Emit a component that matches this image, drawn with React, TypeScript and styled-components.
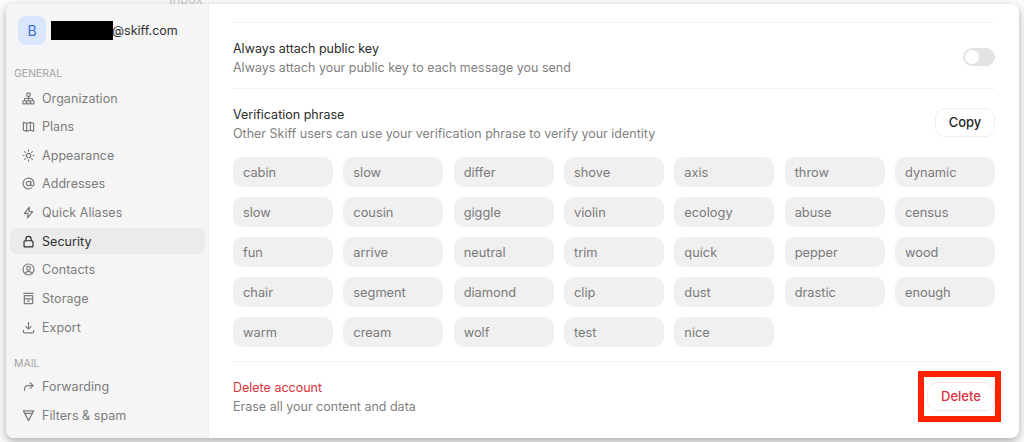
import React from 'react';
import styled, { createGlobalStyle } from 'styled-components';

const GlobalStyle = createGlobalStyle`
  html, body {
    margin: 0;
    padding: 0;
    background: #fdfdfd;
    font-family: Inter, "Liberation Sans", sans-serif;
  }
`;

const Page = styled.div`
  position: relative;
  box-sizing: border-box;
  width: 1024px;
  height: 442px;
  overflow: hidden;
  padding: 4px 5px 4px 6px;
  background: #fbfbfb;
`;

const BehindText = styled.span`
  position: absolute;
  top: -9px;
  left: 169px;
  font-size: 13px;
  color: #c9c9c9;
`;

const Modal = styled.div`
  position: relative;
  display: flex;
  height: 434px;
  border-radius: 8px;
  overflow: hidden;
  background: #ffffff;
  box-shadow: 0 3px 8px rgba(0, 0, 0, 0.32);
`;

const Sidebar = styled.aside`
  box-sizing: border-box;
  width: 203px;
  flex-shrink: 0;
  padding: 11px 3px 0 4px;
  background: #f5f5f5;
  border-right: 1px solid #efefef;
`;

const Profile = styled.div`
  display: flex;
  align-items: center;
  gap: 5px;
  padding-left: 8px;
  height: 30px;
`;

const Avatar = styled.div`
  display: flex;
  align-items: center;
  justify-content: center;
  width: 28px;
  height: 29px;
  border-radius: 8px;
  background: #d9e6fd;
  color: #3f6fd0;
  font-size: 14px;
`;

const Redaction = styled.div`
  width: 62px;
  height: 19px;
  background: #000;
`;

const Email = styled.span`
  margin-left: -6px;
  font-size: 12.5px;
  color: #333;
`;

const SectionLabel = styled.div<{ $top: number }>`
  margin-top: ${(p) => p.$top}px;
  padding-left: 4px;
  font-size: 10.5px;
  line-height: 13px;
  color: #a3a3a3;
`;

const NavList = styled.div<{ $top: number }>`
  margin-top: ${(p) => p.$top}px;
`;

const NavItem = styled.div<{ $active?: boolean }>`
  display: flex;
  align-items: center;
  gap: 7px;
  height: 26px;
  margin-bottom: 2.67px;
  padding-left: 12px;
  border-radius: 7px;
  font-size: 12.5px;
  letter-spacing: 0.05px;
  color: ${(p) => (p.$active ? '#303030' : '#7c7c7c')};
  background: ${(p) => (p.$active ? '#ebebeb' : 'transparent')};
`;

const NavIcon = styled.svg`
  width: 13px;
  height: 13px;
  flex-shrink: 0;
  fill: none;
  stroke: currentColor;
  stroke-width: 1.3;
  stroke-linecap: round;
  stroke-linejoin: round;
`;

const Main = styled.main`
  flex: 1;
  box-sizing: border-box;
  padding: 0 24px;
`;

const Section = styled.section<{ $height: number; $last?: boolean }>`
  box-sizing: border-box;
  height: ${(p) => p.$height}px;
  border-bottom: ${(p) => (p.$last ? 'none' : '1px solid #f2f2f2')};
`;

const SettingRow = styled.div<{ $top: number }>`
  display: flex;
  align-items: center;
  justify-content: space-between;
  padding-top: ${(p) => p.$top}px;
`;

const Title = styled.div<{ $danger?: boolean }>`
  font-size: 12.5px;
  line-height: 19px;
  color: ${(p) => (p.$danger ? '#d8333c' : '#2b2b2b')};
`;

const Description = styled.div`
  font-size: 12.5px;
  line-height: 19px;
  color: #7f7f7f;
`;

const Toggle = styled.div`
  position: relative;
  width: 32px;
  height: 18px;
  margin-bottom: 2px;
  border-radius: 9px;
  background: #e3e3e3;
`;

const Knob = styled.div`
  position: absolute;
  top: 2px;
  left: 2px;
  width: 14px;
  height: 14px;
  border-radius: 50%;
  background: #ffffff;
`;

const Button = styled.button<{ $danger?: boolean; $width: number }>`
  box-sizing: border-box;
  width: ${(p) => p.$width}px;
  height: 29px;
  margin-bottom: ${(p) => (p.$danger ? 2 : 4)}px;
  padding: 0;
  border-radius: 10px;
  border: 1px solid ${(p) => (p.$danger ? '#f8e6e6' : '#efefef')};
  background: #ffffff;
  font-family: inherit;
  font-size: 13px;
  font-weight: 500;
  color: ${(p) => (p.$danger ? '#d8333c' : '#1f1f1f')};
`;

const PhraseGrid = styled.div`
  display: grid;
  grid-template-columns: repeat(7, 1fr);
  gap: 10px 10.33px;
  margin-top: 14px;
`;

const Word = styled.div`
  display: flex;
  align-items: center;
  height: 30px;
  padding-left: 10px;
  border-radius: 10px;
  background: #f0f0f0;
  font-size: 12.8px;
  color: #7a7a7a;
`;

const Annotation = styled.div`
  position: absolute;
  left: 912px;
  top: 367px;
  box-sizing: border-box;
  width: 83px;
  height: 51px;
  border: 6px solid #fa2200;
`;

const icons: Record<string, React.ReactNode> = {
  Organization: (
    <>
      <rect x="5.2" y="1.2" width="3.6" height="3.4" rx="0.6" />
      <rect x="1" y="9.4" width="3.6" height="3.4" rx="0.6" />
      <rect x="5.2" y="9.4" width="3.6" height="3.4" rx="0.6" />
      <rect x="9.4" y="9.4" width="3.6" height="3.4" rx="0.6" />
      <path d="M7 4.6v4.8M2.8 9.4V7h8.4v2.4" />
    </>
  ),
  Plans: (
    <>
      <path d="M1.5 2.5 5 3.5l4-1 3.5 1v8.5l-3.5-1-4 1-3.5-1z" />
      <path d="M5 3.5V12M9 2.5V11" />
    </>
  ),
  Appearance: (
    <>
      <circle cx="7" cy="7" r="2.4" />
      <path d="M7 1.2v1M7 11.8v1M1.2 7h1M11.8 7h1M2.9 2.9l.7.7M10.4 10.4l.7.7M2.9 11.1l.7-.7M10.4 3.6l.7-.7" />
    </>
  ),
  Addresses: (
    <>
      <circle cx="7" cy="7" r="2.4" />
      <path d="M9.4 4.6v3.2a1.7 1.7 0 0 0 3.4 0V7a5.8 5.8 0 1 0-2.4 4.7" />
    </>
  ),
  'Quick Aliases': <path d="M8 1.2 2.5 8h4L6 12.8 11.5 6h-4z" />,
  Security: (
    <>
      <rect x="2.2" y="6.2" width="9.6" height="6.6" rx="1" />
      <path d="M4.2 6.2V4.2a2.8 2.8 0 0 1 5.6 0v2" />
    </>
  ),
  Contacts: (
    <>
      <circle cx="7" cy="7" r="5.9" />
      <circle cx="7" cy="5.6" r="2" />
      <path d="M3.4 11.2c.8-1.5 2-2.1 3.6-2.1s2.8.6 3.6 2.1" />
    </>
  ),
  Storage: (
    <>
      <path d="M2 1.5h10M2.5 4h9v8.5h-9z" />
      <path d="M2.5 7.5h9M6 9.8h2" />
    </>
  ),
  Export: (
    <>
      <path d="M7 1.5v7M4.2 6 7 8.7 9.8 6" />
      <path d="M1.5 10v1.5a1.3 1.3 0 0 0 1.3 1.3h8.4a1.3 1.3 0 0 0 1.3-1.3V10" />
    </>
  ),
  Forwarding: (
    <>
      <path d="M8.8 3 12 6 8.8 9" />
      <path d="M11.8 6H6.2a3.4 3.4 0 0 0-3.4 3.4v1.8" />
    </>
  ),
  'Filters & spam': (
    <>
      <path d="M1.5 2h11L7 12.5z" />
      <path d="M3.2 4.6h7.6" />
    </>
  ),
};

const general = ['Organization', 'Plans', 'Appearance', 'Addresses', 'Quick Aliases', 'Security', 'Contacts', 'Storage', 'Export'];
const mail = ['Forwarding', 'Filters & spam'];

const words = [
  'cabin', 'slow', 'differ', 'shove', 'axis', 'throw', 'dynamic',
  'slow', 'cousin', 'giggle', 'violin', 'ecology', 'abuse', 'census',
  'fun', 'arrive', 'neutral', 'trim', 'quick', 'pepper', 'wood',
  'chair', 'segment', 'diamond', 'clip', 'dust', 'drastic', 'enough',
  'warm', 'cream', 'wolf', 'test', 'nice',
];

const NavEntry = ({ label }: { label: string }) => (
  <NavItem $active={label === 'Security'}>
    <NavIcon viewBox="0 0 14 14">{icons[label]}</NavIcon>
    {label}
  </NavItem>
);

export default function App() {
  return (
    <Page>
      <GlobalStyle />
      <BehindText>Inbox</BehindText>
      <Modal>
        <Sidebar>
          <Profile>
            <Avatar>B</Avatar>
            <Redaction />
            <Email>@skiff.com</Email>
          </Profile>
          <SectionLabel $top={22}>GENERAL</SectionLabel>
          <NavList $top={5}>
            {general.map((label) => (
              <NavEntry key={label} label={label} />
            ))}
          </NavList>
          <SectionLabel $top={17}>MAIL</SectionLabel>
          <NavList $top={3.5}>
            {mail.map((label) => (
              <NavEntry key={label} label={label} />
            ))}
          </NavList>
        </Sidebar>
        <Main>
          <Section $height={19} />
          <Section $height={66}>
            <SettingRow $top={16}>
              <div>
                <Title>Always attach public key</Title>
                <Description>Always attach your public key to each message you send</Description>
              </div>
              <Toggle>
                <Knob />
              </Toggle>
            </SettingRow>
          </Section>
          <Section $height={273}>
            <SettingRow $top={16}>
              <div>
                <Title>Verification phrase</Title>
                <Description>Other Skiff users can use your verification phrase to verify your identity</Description>
              </div>
              <Button $width={60}>Copy</Button>
            </SettingRow>
            <PhraseGrid>
              {words.map((word, i) => (
                <Word key={i}>{word}</Word>
              ))}
            </PhraseGrid>
          </Section>
          <Section $height={76} $last>
            <SettingRow $top={16}>
              <div>
                <Title $danger>Delete account</Title>
                <Description>Erase all your content and data</Description>
              </div>
              <Button $danger $width={68}>Delete</Button>
            </SettingRow>
          </Section>
        </Main>
        <Annotation />
      </Modal>
    </Page>
  );
}
